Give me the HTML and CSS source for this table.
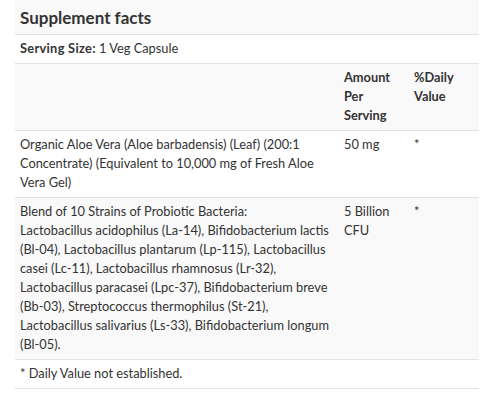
FILE: index.html
```html
<!DOCTYPE html>
<html>
<head>
<meta charset="utf-8">
<link rel="stylesheet" href="styles.css">
</head>
<body>
<div class="facts">
  <div class="title">Supplement facts</div>
  <div class="serving"><b>Serving Size:</b> 1 Veg Capsule</div>
  <table class="tbl">
    <colgroup><col class="c1"><col class="c2"><col class="c3"></colgroup>
    <tr class="head shade">
      <td></td>
      <td>Amount Per Serving</td>
      <td>%Daily Value</td>
    </tr>
    <tr>
      <td>Organic Aloe Vera (Aloe barbadensis) (Leaf) (200:1 Concentrate) (Equivalent to 10,000 mg of Fresh Aloe Vera Gel)</td>
      <td>50 mg</td>
      <td>*</td>
    </tr>
    <tr class="shade">
      <td>Blend of 10 Strains of Probiotic Bacteria:<br>Lactobacillus acidophilus (La-14), Bifidobacterium lactis (Bl-04), Lactobacillus plantarum (Lp-115), Lactobacillus casei (Lc-11), Lactobacillus rhamnosus (Lr-32), Lactobacillus paracasei (Lpc-37), Bifidobacterium breve (Bb-03), Streptococcus thermophilus (St-21), Lactobacillus salivarius (Ls-33), Bifidobacterium longum (Bl-05).</td>
      <td>5 Billion CFU</td>
      <td>*</td>
    </tr>
  </table>
  <div class="foot">* Daily Value not established.</div>
</div>
</body>
</html>
```
FILE: styles.css
```css
html, body {
  margin: 0;
  padding: 0;
  background: #ffffff;
}
body {
  font-family: Lato, "Open Sans", sans-serif;
  color: #333333;
  font-size: 12.8px;
  line-height: 19px;
}
.facts {
  width: 464px;
  margin-left: 15px;
}
.title {
  background: #f9f9f9;
  font-weight: bold;
  font-size: 17px;
  line-height: 20px;
  padding: 8px 5px 6px;
  border-bottom: 1px solid #e3e3e3;
}
.serving {
  padding: 4px 5px 5px;
  border-bottom: 1px solid #e3e3e3;
}
.serving b {
  font-weight: bold;
  letter-spacing: 0.3px;
}
.tbl {
  width: 100%;
  border-collapse: collapse;
  table-layout: fixed;
}
.c1 { width: 324px; }
.c2 { width: 70px; }
.c3 { width: 70px; }
.tbl td {
  vertical-align: top;
  padding: 4px 5px 5px;
  border-bottom: 1px solid #e3e3e3;
}
.shade td {
  background: #f9f9f9;
}
.head td {
  font-weight: bold;
}
.foot {
  padding: 4px 5px 5px;
  border-bottom: 1px solid #e3e3e3;
}
```
